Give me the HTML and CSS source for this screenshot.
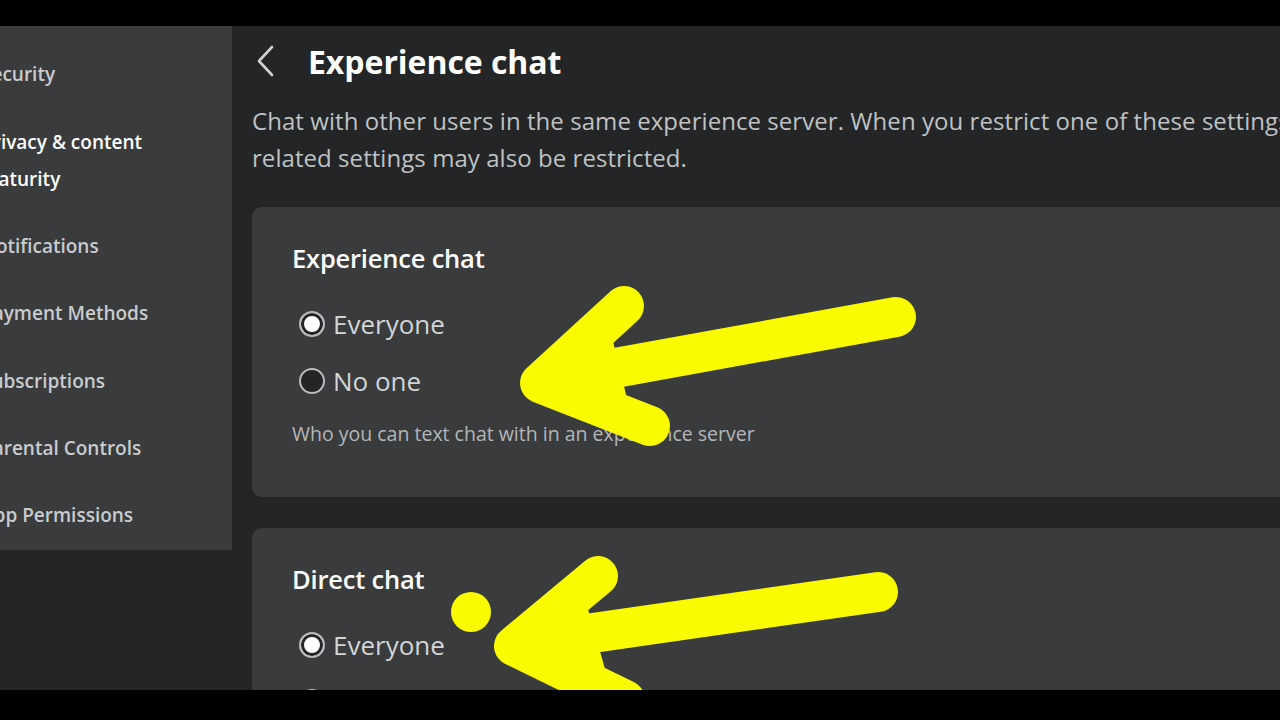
FILE: index.html
```html
<!DOCTYPE html>
<html>
<head>
<meta charset="utf-8">
<link rel="stylesheet" href="styles.css">
</head>
<body>
<div class="frame">
  <aside class="side">
    <nav class="side-panel">
      <div class="side-item">Security</div>
      <div class="side-item active">Privacy &amp; content<br>Maturity</div>
      <div class="side-item">Notifications</div>
      <div class="side-item">Payment Methods</div>
      <div class="side-item">Subscriptions</div>
      <div class="side-item">Parental Controls</div>
      <div class="side-item">App Permissions</div>
    </nav>
  </aside>
  <main class="main">
    <header class="head">
      <svg class="back" width="20" height="32" viewBox="0 0 20 32"><polyline points="16,2 3,16 16,30" fill="none" stroke="#cfd0d1" stroke-width="2.6" stroke-linecap="round" stroke-linejoin="round"/></svg>
      <h1 class="title">Experience chat</h1>
    </header>
    <p class="desc"><span class="line">Chat with other users in the same experience server. When you restrict one of these settings,</span><span class="line">related settings may also be restricted.</span></p>
    <section class="card">
      <h2 class="card-title">Experience chat</h2>
      <div class="opts">
        <label class="opt"><span class="radio on"></span>Everyone</label>
        <label class="opt"><span class="radio"></span>No one</label>
      </div>
      <p class="help">Who you can text chat with in an experience server</p>
    </section>
    <section class="card">
      <h2 class="card-title">Direct chat</h2>
      <div class="opts">
        <label class="opt"><span class="radio on"></span>Everyone</label>
        <label class="opt"><span class="radio"></span>Friends</label>
      </div>
    </section>
  </main>
  <svg class="arrows" width="1280" height="664" viewBox="0 26 1280 664">
    <g fill="#fafa00" stroke="#fafa00" stroke-width="40" stroke-linecap="round" stroke-linejoin="round">
      <line x1="896" y1="317" x2="560" y2="378"/>
      <polyline fill="none" points="624,306 540,383 650,426"/>
      <polygon stroke-width="20" points="600,330 545,383 620,412"/>
      <line x1="878" y1="592" x2="530" y2="642"/>
      <polyline fill="none" points="598,576 514,646 625,700"/>
      <polygon stroke-width="20" points="575,600 520,646 600,688"/>
    </g>
    <circle cx="471" cy="612" r="20" fill="#fafa00"/>
  </svg>
</div>
</body>
</html>
```
FILE: styles.css
```css
html, body {
  margin: 0;
  padding: 0;
  background: #000;
}
body {
  width: 1280px;
  height: 720px;
  overflow: hidden;
  font-family: "Open Sans", "Noto Sans", sans-serif;
}
.frame {
  position: relative;
  margin-top: 26px;
  height: 664px;
  display: flex;
  background: #232527;
  overflow: hidden;
}
.side {
  width: 232px;
  flex: none;
}
.side-panel {
  height: 524px;
  box-sizing: border-box;
  padding-top: 15px;
  background: #393b3d;
  overflow: hidden;
}
.side-item {
  margin-left: -19px;
  padding: 15.2px 0;
  font-size: 19px;
  font-weight: 600;
  line-height: 37px;
  color: #c9cbcd;
  white-space: nowrap;
}
.side-item.active {
  color: #ffffff;
}
.main {
  flex: 1;
  padding-left: 20px;
  min-width: 0;
}
.head {
  display: flex;
  align-items: center;
  height: 70px;
}
.back {
  margin-left: 4px;
  margin-right: 32px;
}
.title {
  margin: 0;
  font-size: 32px;
  font-weight: 700;
  color: #ffffff;
  letter-spacing: -0.05px;
}
.desc {
  margin: 6px 0 0;
  font-size: 24px;
  line-height: 37px;
  color: #bfc1c3;
  letter-spacing: 0.06px;
}
.line {
  display: block;
  white-space: nowrap;
}
.card {
  width: 1100px;
  margin-top: 31px;
  background: #393b3d;
  border-radius: 10px;
  padding: 34px 40px 50px;
  box-sizing: border-box;
}
.card-title {
  margin: 0;
  font-size: 25.5px;
  font-weight: 600;
  line-height: 34px;
  color: #ffffff;
  letter-spacing: -0.2px;
}
.opts {
  margin-top: 31px;
  display: flex;
  flex-direction: column;
  gap: 21px;
}
.opt {
  display: flex;
  align-items: center;
  gap: 8px;
  font-size: 26px;
  line-height: 36px;
  color: #d2d4d6;
  padding-left: 7px;
}
.radio {
  width: 22px;
  height: 22px;
  border-radius: 50%;
  border: 2px solid #b9bbbd;
  background: #232527;
  box-sizing: content-box;
}
.radio.on {
  background: #ffffff;
  box-shadow: inset 0 0 0 3px #232527;
}
.help {
  margin: 22px 0 0;
  font-size: 19.5px;
  line-height: 26px;
  color: #b4b6b8;
}
.arrows {
  position: absolute;
  left: 0;
  top: 0;
  pointer-events: none;
}
```
